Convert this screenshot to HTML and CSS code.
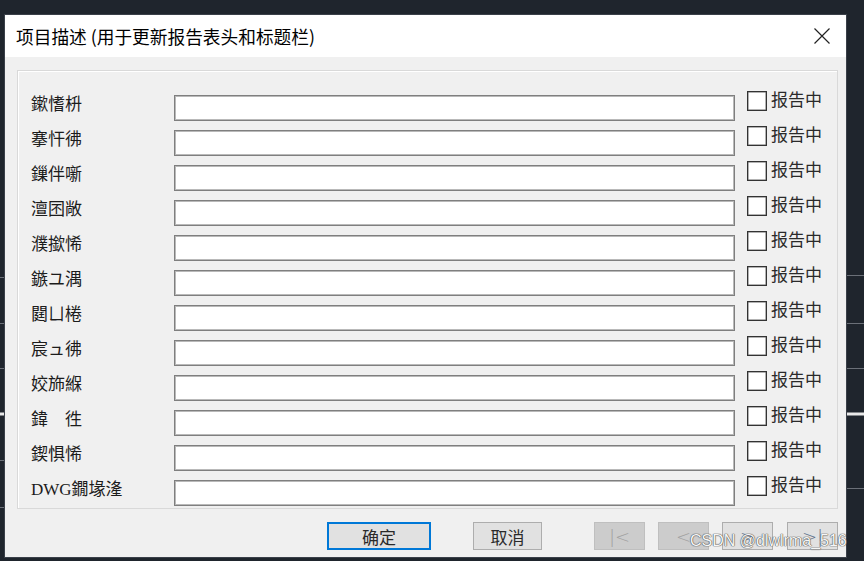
FILE: index.html
```html
<!DOCTYPE html>
<html lang="zh-CN">
<head>
    <meta charset="UTF-8">
    <title>项目描述</title>
    <link rel="stylesheet" href="styles.css">
</head>
<body>
    <svg class="backdrop" width="864" height="561" viewBox="0 0 864 561">
        <g stroke="#6b7078" stroke-width="1">
            <line x1="0" y1="277.5" x2="6" y2="277.5"/>
            <line x1="0" y1="323.5" x2="6" y2="323.5"/>
            <line x1="0" y1="368.5" x2="6" y2="368.5"/>
            <line x1="0" y1="460.5" x2="6" y2="460.5"/>
            <line x1="0" y1="507.5" x2="6" y2="507.5"/>
            <line x1="846" y1="275.5" x2="864" y2="275.5"/>
            <line x1="846" y1="323.5" x2="864" y2="323.5"/>
            <line x1="846" y1="368.5" x2="864" y2="368.5"/>
            <line x1="846" y1="488.5" x2="864" y2="488.5"/>
        </g>
        <line x1="0" y1="414" x2="6" y2="414" stroke="#e8e8e8" stroke-width="3"/>
        <line x1="846" y1="414" x2="864" y2="414" stroke="#e8e8e8" stroke-width="3"/>
    </svg>

    <div class="dialog">
        <div class="titlebar">
            <span class="title">项目描述 (用于更新报告表头和标题栏)</span>
            <svg class="close" width="16" height="16" viewBox="0 0 16 16">
                <path d="M0.5 0.5 L15.5 15.5 M15.5 0.5 L0.5 15.5" stroke="#222" stroke-width="1.2" fill="none"/>
            </svg>
        </div>

        <div class="dialog-body">
            <div class="group">
                <div class="field-row"><span class="field-label">鏉愭枡</span><span class="field-input"></span><span class="check"></span><span class="check-label">报告中</span></div>
                <div class="field-row"><span class="field-label">搴忓彿</span><span class="field-input"></span><span class="check"></span><span class="check-label">报告中</span></div>
                <div class="field-row"><span class="field-label">鏁伴噺</span><span class="field-input"></span><span class="check"></span><span class="check-label">报告中</span></div>
                <div class="field-row"><span class="field-label">澶囨敞</span><span class="field-input"></span><span class="check"></span><span class="check-label">报告中</span></div>
                <div class="field-row"><span class="field-label">濮撳悕</span><span class="field-input"></span><span class="check"></span><span class="check-label">报告中</span></div>
                <div class="field-row"><span class="field-label">鏃ユ湡</span><span class="field-input"></span><span class="check"></span><span class="check-label">报告中</span></div>
                <div class="field-row"><span class="field-label">閮ㄩ棬</span><span class="field-input"></span><span class="check"></span><span class="check-label">报告中</span></div>
                <div class="field-row"><span class="field-label">宸ュ彿</span><span class="field-input"></span><span class="check"></span><span class="check-label">报告中</span></div>
                <div class="field-row"><span class="field-label">姣斾緥</span><span class="field-input"></span><span class="check"></span><span class="check-label">报告中</span></div>
                <div class="field-row"><span class="field-label">鍏　徃</span><span class="field-input"></span><span class="check"></span><span class="check-label">报告中</span></div>
                <div class="field-row"><span class="field-label">鍥惧悕</span><span class="field-input"></span><span class="check"></span><span class="check-label">报告中</span></div>
                <div class="field-row"><span class="field-label">DWG鐗堟湰</span><span class="field-input"></span><span class="check"></span><span class="check-label">报告中</span></div>
            </div>

            <div class="button-row">
                <span class="btn btn-default">确定</span>
                <span class="btn btn-cancel">取消</span>
                <span class="btn btn-nav btn-disabled btn-first">|&lt;</span>
                <span class="btn btn-nav btn-disabled">&lt;</span>
                <span class="btn btn-nav">&gt;</span>
                <span class="btn btn-nav btn-last">&gt;|</span>
            </div>
        </div>
    </div>

    <div class="watermark">CSDN @dlwlrma_516</div>
</body>
</html>
```

FILE: styles.css
```css
* {
    margin: 0;
    padding: 0;
    box-sizing: border-box;
}

body {
    width: 864px;
    height: 561px;
    background: #1f252d;
    overflow: hidden;
    position: relative;
    font-family: "Noto Sans CJK SC", sans-serif;
}

.backdrop {
    position: absolute;
    left: 0;
    top: 0;
}

.dialog {
    position: relative;
    width: 843px;
    height: 544px;
    margin: 14px 0 0 4px;
    border: 1px solid #3a4049;
    background: #f0f0f0;
    overflow: hidden;
}

.titlebar {
    height: 42px;
    background: #ffffff;
    display: flex;
    align-items: center;
    justify-content: space-between;
    padding: 0 16px 0 11px;
}

.title {
    font-size: 17.7px;
    color: #000;
    line-height: 1;
    margin-top: 1px;
}

.close {
    display: block;
}

.dialog-body {
    padding: 13px 0 0 12px;
}

.group {
    width: 821px;
    border: 1px solid #d9d9d9;
    box-shadow: inset 1px 1px 0 #ffffff;
    padding: 20px 0 2px 13px;
}

.field-row {
    display: flex;
    align-items: flex-start;
    height: 30px;
    margin-bottom: 5px;
}

.field-row:last-child {
    margin-bottom: 0;
}

.field-label {
    width: 143px;
    margin-top: 1px;
    line-height: 26px;
    font-family: "Liberation Serif", "Noto Sans CJK SC", serif;
    font-size: 17px;
    color: #1c1c1c;
    white-space: pre;
}

.field-input {
    width: 561px;
    height: 26px;
    margin-top: 4px;
    background: #fff;
    border: 1px solid #7f7f7f;
    box-shadow: inset 0 0 0 1px #b9b9b9;
}

.check {
    width: 20px;
    height: 20px;
    margin-left: 12px;
    background: #fff;
    border: 1px solid #333;
    box-shadow: inset 0 0 0 0.5px #666;
}

.check-label {
    margin-left: 4px;
    line-height: 20px;
    font-family: "Liberation Serif", "Noto Sans CJK SC", serif;
    font-size: 17px;
    color: #2a2a2a;
}

.button-row {
    display: flex;
    margin-top: 13px;
    padding-left: 310px;
}

.btn {
    height: 28px;
    display: flex;
    align-items: center;
    justify-content: center;
    background: #e1e1e1;
    border: 1px solid #adadad;
    font-family: "Liberation Serif", "Noto Sans CJK SC", serif;
    font-size: 17px;
    color: #2a2a2a;
}

.btn-default {
    width: 104px;
    border: 2px solid #0078d7;
}

.btn-cancel {
    width: 69px;
    margin-left: 42px;
}

.btn-nav {
    width: 51px;
    margin-left: 13px;
    font-family: "DejaVu Sans", sans-serif;
    font-size: 18px;
    font-weight: 300;
    color: #5b6f8a;
}

.btn-first {
    margin-left: 52px;
}

.btn-last {
    margin-left: 14px;
}

.btn-disabled {
    background: #cccccc;
    border-color: #bfbfbf;
    color: #a0a0a0;
}

.watermark {
    position: absolute;
    left: 690px;
    top: 532px;
    font-family: "Liberation Sans", sans-serif;
    font-size: 16px;
    color: #f6f6f6;
    text-shadow: 0 0 1px #555, 0 0 1px #555, 0 0 1px #555;
    white-space: nowrap;
}
```
